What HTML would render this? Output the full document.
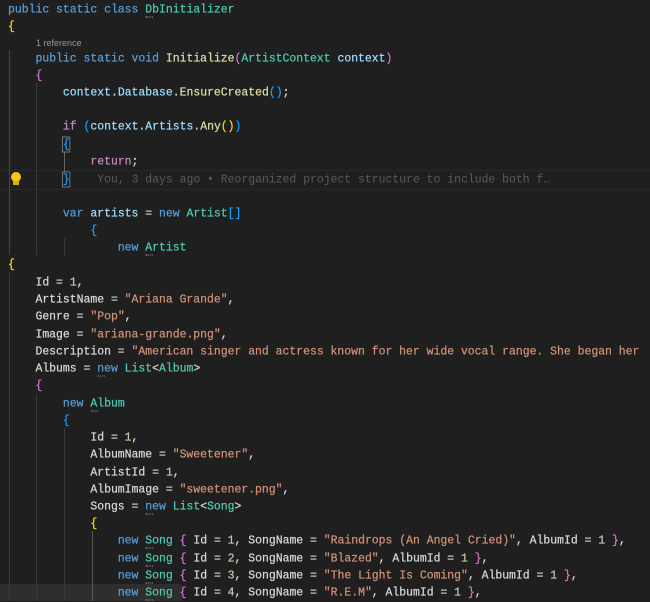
<!DOCTYPE html>
<html><head><meta charset="utf-8"><style>
html,body{margin:0;padding:0;background:#1f1f1f;width:650px;height:601px;overflow:hidden}
.l{position:absolute;left:8px;height:17px;line-height:17px;white-space:pre;font-family:"Liberation Mono",monospace;font-size:12.3px;color:#d8d8d8;transform:translateY(1.5px) scaleX(0.93);transform-origin:0 0;-webkit-text-stroke:0.25px currentColor}
.k{color:#569cd6}.t{color:#4ec9b0}.m{color:#dcdcaa}.v{color:#9cdcfe}.s{color:#ce9178}.n{color:#b5cea8}
.g{color:#ffd700}.p{color:#da70d6}.b{color:#179fff}.c{color:#c586c0}
.gd{position:absolute;width:1px;background:#3a3a3a}
.u{position:relative}
.u::after{content:"";position:absolute;left:0;bottom:-1px;width:8px;border-bottom:1px dotted #999}
</style></head><body>
<div style="position:absolute;left:0;top:170px;width:650px;height:18px;border-top:1px solid #282828;border-bottom:1px solid #282828"></div>
<div style="position:absolute;left:0;top:584px;width:182px;height:17px;background:#2e2e2e"></div>
<div class="gd" style="left:9px;top:50px;height:205px;background:#444"></div>
<div class="gd" style="left:36px;top:83px;height:172px"></div>
<div class="gd" style="left:64px;top:238px;height:18px"></div>
<div class="gd" style="left:9px;top:273px;height:328px"></div>
<div class="gd" style="left:36px;top:394px;height:207px"></div>
<div class="gd" style="left:64px;top:428px;height:173px"></div>
<div class="gd" style="left:92px;top:531px;height:70px;background:#555"></div>
<div class="gd" style="left:64px;top:152px;height:20px;background:#666"></div>

<div class="l" style="top:0"><span class="k">public static class</span> <span class="t u">DbInitializer</span></div>
<div class="l" style="top:17px"><span class="g">{</span></div>
<div class="l" style="top:36px;left:36px;font-family:'Liberation Sans',sans-serif;font-size:9px;color:#999;line-height:14px;transform:none;-webkit-text-stroke:0">1 reference</div>
<div class="l" style="top:49px">    <span class="k">public static void</span> <span class="m">Initialize</span><span class="p">(</span><span class="t">ArtistContext</span> <span class="v">context</span><span class="p">)</span></div>
<div class="l" style="top:66px">    <span class="p">{</span></div>
<div class="l" style="top:83px">        <span class="v">context</span>.<span class="v">Database</span>.<span class="m">EnsureCreated</span><span class="b">()</span>;</div>
<div class="l" style="top:117px">        <span class="c">if</span> <span class="b">(</span><span class="v">context</span>.<span class="v">Artists</span>.<span class="m">Any</span><span class="g">()</span><span class="b">)</span></div>
<div class="l" style="top:135px">        <span class="b" style="outline:1px solid #777">{</span></div>
<div class="l" style="top:152px">            <span class="c">return</span>;</div>
<div class="l" style="top:170px">        <span class="b" style="outline:1px solid #777">}</span>    <span style="color:#5a5a5a;-webkit-text-stroke:0">You, 3 days ago • Reorganized project structure to include both f…</span></div>
<div style="position:absolute;left:11px;top:172px;width:10px;height:10px;border-radius:50%;background:#f5c518"></div>
<div style="position:absolute;left:13px;top:181px;width:6px;height:4px;background:#ddb010"></div>
<div class="l" style="top:204px">        <span class="k">var</span> <span class="v">artists</span> = <span class="k">new</span> <span class="t">Artist</span><span class="b">[]</span></div>
<div class="l" style="top:221px">            <span class="b">{</span></div>
<div class="l" style="top:238px">                <span class="k">new</span> <span class="t u">Artist</span></div>
<div class="l" style="top:255px"><span class="g">{</span></div>
<div class="l" style="top:273px">    Id = <span class="n">1</span>,</div>
<div class="l" style="top:290px">    ArtistName = <span class="s">"Ariana Grande"</span>,</div>
<div class="l" style="top:307px">    Genre = <span class="s">"Pop"</span>,</div>
<div class="l" style="top:325px">    Image = <span class="s">"ariana-grande.png"</span>,</div>
<div class="l" style="top:342px">    Description = <span class="s">"American singer and actress known for her wide vocal range. She began her</span></div>
<div class="l" style="top:359px">    Albums = <span class="k u">new</span> <span class="t">List</span>&lt;<span class="t">Album</span>&gt;</div>
<div class="l" style="top:376px">    <span class="p">{</span></div>
<div class="l" style="top:394px">        <span class="k">new</span> <span class="t u">Album</span></div>
<div class="l" style="top:411px">        <span class="b">{</span></div>
<div class="l" style="top:428px">            Id = <span class="n">1</span>,</div>
<div class="l" style="top:445px">            AlbumName = <span class="s">"Sweetener"</span>,</div>
<div class="l" style="top:463px">            ArtistId = <span class="n">1</span>,</div>
<div class="l" style="top:480px">            AlbumImage = <span class="s">"sweetener.png"</span>,</div>
<div class="l" style="top:497px">            Songs = <span class="k u">new</span> <span class="t">List</span>&lt;<span class="t">Song</span>&gt;</div>
<div class="l" style="top:514px">            <span class="g">{</span></div>
<div class="l" style="top:531px">                <span class="k">new</span> <span class="t u">Song</span> <span class="p">{</span> Id = <span class="n">1</span>, SongName = <span class="s">"Raindrops (An Angel Cried)"</span>, AlbumId = <span class="n">1</span> <span class="p">}</span>,</div>
<div class="l" style="top:549px">                <span class="k">new</span> <span class="t u">Song</span> <span class="p">{</span> Id = <span class="n">2</span>, SongName = <span class="s">"Blazed"</span>, AlbumId = <span class="n">1</span> <span class="p">}</span>,</div>
<div class="l" style="top:566px">                <span class="k">new</span> <span class="t u">Song</span> <span class="p">{</span> Id = <span class="n">3</span>, SongName = <span class="s">"The Light Is Coming"</span>, AlbumId = <span class="n">1</span> <span class="p">}</span>,</div>
<div class="l" style="top:583px">                <span class="k">new</span> <span class="t u">Song</span> <span class="p">{</span> Id = <span class="n">4</span>, SongName = <span class="s">"R.E.M"</span>, AlbumId = <span class="n">1</span> <span class="p">}</span>,</div>
</body></html>
